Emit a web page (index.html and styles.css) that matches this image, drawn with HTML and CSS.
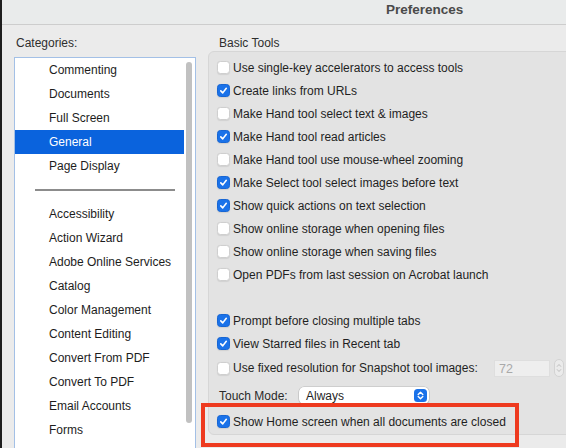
FILE: index.html
```html
<!DOCTYPE html>
<html lang="en">
<head>
<meta charset="utf-8">
<title>Preferences</title>
<link rel="stylesheet" href="styles.css">
</head>
<body>
<div class="window">
  <header class="titlebar"><span class="title">Preferences</span></header>
  <div class="content">
    <aside class="sidebar">
      <div class="label cat-label">Categories:</div>
      <div class="listbox">
        <ul class="list">
          <li>Commenting</li>
          <li>Documents</li>
          <li>Full Screen</li>
          <li class="sel">General</li>
          <li>Page Display</li>
          <li class="sep"></li>
          <li>Accessibility</li>
          <li>Action Wizard</li>
          <li>Adobe Online Services</li>
          <li>Catalog</li>
          <li>Color Management</li>
          <li>Content Editing</li>
          <li>Convert From PDF</li>
          <li>Convert To PDF</li>
          <li>Email Accounts</li>
          <li>Forms</li>
        </ul>
        <div class="scrollbar"><div class="thumb"></div></div>
      </div>
    </aside>
    <main class="panel">
      <div class="label group-label">Basic Tools</div>
      <div class="group">
        <div class="row"><span class="cb"></span><span>Use single-key accelerators to access tools</span></div>
        <div class="row"><span class="cb on"><svg viewBox="0 0 13 13"><path d="M3.3 6.9 L5.6 9.3 L9.8 3.9"/></svg></span><span>Create links from URLs</span></div>
        <div class="row"><span class="cb"></span><span>Make Hand tool select text &amp; images</span></div>
        <div class="row"><span class="cb on"><svg viewBox="0 0 13 13"><path d="M3.3 6.9 L5.6 9.3 L9.8 3.9"/></svg></span><span>Make Hand tool read articles</span></div>
        <div class="row"><span class="cb"></span><span>Make Hand tool use mouse-wheel zooming</span></div>
        <div class="row"><span class="cb on"><svg viewBox="0 0 13 13"><path d="M3.3 6.9 L5.6 9.3 L9.8 3.9"/></svg></span><span>Make Select tool select images before text</span></div>
        <div class="row"><span class="cb on"><svg viewBox="0 0 13 13"><path d="M3.3 6.9 L5.6 9.3 L9.8 3.9"/></svg></span><span>Show quick actions on text selection</span></div>
        <div class="row"><span class="cb"></span><span>Show online storage when opening files</span></div>
        <div class="row"><span class="cb"></span><span>Show online storage when saving files</span></div>
        <div class="row"><span class="cb"></span><span>Open PDFs from last session on Acrobat launch</span></div>
        <div class="row spacer"></div>
        <div class="row"><span class="cb on"><svg viewBox="0 0 13 13"><path d="M3.3 6.9 L5.6 9.3 L9.8 3.9"/></svg></span><span>Prompt before closing multiple tabs</span></div>
        <div class="row"><span class="cb on"><svg viewBox="0 0 13 13"><path d="M3.3 6.9 L5.6 9.3 L9.8 3.9"/></svg></span><span>View Starred files in Recent tab</span></div>
        <div class="row row-fixed">
          <span class="cb"></span><span>Use fixed resolution for Snapshot tool images:</span>
          <span class="numfield">72</span>
          <span class="numstep"><svg viewBox="0 0 10 18"><path d="M2.8 7 L5 4.6 L7.2 7 M2.8 11 L5 13.4 L7.2 11"/></svg></span>
        </div>
        <div class="row row-touch">
          <span class="touch-label">Touch Mode:</span>
          <span class="select"><span class="select-text">Always</span><span class="select-btn"><svg viewBox="0 0 13 13"><path d="M4.2 5.4 L6.5 3.2 L8.8 5.4 M4.2 7.6 L6.5 9.8 L8.8 7.6"/></svg></span></span>
        </div>
        <div class="row"><span class="cb on"><svg viewBox="0 0 13 13"><path d="M3.3 6.9 L5.6 9.3 L9.8 3.9"/></svg></span><span>Show Home screen when all documents are closed</span></div>
      </div>
    </main>
  </div>
  <div class="highlight"></div>
</div>
</body>
</html>
```

FILE: styles.css
```css
* { box-sizing: border-box; }

html, body {
  margin: 0;
  padding: 0;
  width: 566px;
  height: 448px;
  overflow: hidden;
  background: #ebebeb;
}

body {
  font-family: "Liberation Sans", Arial, sans-serif;
  font-size: 12px;
  color: #1f1f1f;
}

.window {
  position: relative;
  width: 566px;
  height: 448px;
  border-left: 2px solid #1e1e1e;
  background: #ebebeb;
  overflow: hidden;
}

.titlebar {
  height: 25px;
  background: #e9ebeb;
  border-bottom: 1px solid #cdcdcd;
  padding-left: 384px;
  padding-top: 0;
}

.title {
  display: block;
  font-weight: bold;
  font-size: 13.5px;
  line-height: 20px;
  color: #4a4a4a;
}

.content {
  display: flex;
  align-items: flex-start;
}

.label {
  height: 16px;
  line-height: 16px;
  color: #2e2e2e;
  margin-top: 10px;
}

.sidebar {
  margin-left: 12px;
  width: 182px;
  flex: none;
}

.cat-label {
  padding-left: 2px;
  margin-bottom: 6px;
}

.listbox {
  display: flex;
  width: 182px;
  height: 400px;
  background: #ffffff;
  border: 1px solid #a3c0e6;
  border-bottom: none;
}

.list {
  list-style: none;
  margin: 0;
  padding: 0;
  width: 169px;
  flex: none;
}

.list li {
  height: 24px;
  line-height: 24px;
  padding-left: 34px;
  white-space: nowrap;
  color: #1d1d1d;
}

.list li.sel {
  background: #0a63dd;
  color: #ffffff;
}

.list li.sep {
  position: relative;
}

.list li.sep::after {
  content: "";
  position: absolute;
  left: 20px;
  top: 11px;
  width: 140px;
  height: 2px;
  background: #8c8c8c;
}

.scrollbar {
  flex: 1;
  padding-top: 4px;
  padding-left: 2px;
}

.thumb {
  width: 6px;
  height: 361px;
  border-radius: 3px;
  background: #c1c1c1;
}

.panel {
  margin-left: 12px;
  flex: none;
}

.group-label {
  padding-left: 11px;
}

.group {
  width: 380px;
  background: #e3e3e3;
  border: 1px solid #d6d6d6;
  border-radius: 6px;
  padding: 4px 23px 1px 8px;
}

.row {
  display: flex;
  align-items: center;
  height: 23px;
  white-space: nowrap;
  color: #1f1f1f;
}

.row-fixed { height: 26px; }
.row-touch { height: 29px; }

.cb {
  width: 13px;
  height: 13px;
  flex: none;
  margin-right: 3px;
  background: #ffffff;
  border: 1px solid #cfcfcf;
  border-radius: 3.5px;
  box-shadow: 0 0.5px 1px rgba(0,0,0,0.08);
  display: flex;
}

.cb.on {
  background: #1a72e9;
  border-color: #1766d4;
}

.cb svg {
  width: 11px;
  height: 11px;
}

.cb svg path {
  fill: none;
  stroke: #ffffff;
  stroke-width: 1.9;
  stroke-linecap: round;
  stroke-linejoin: round;
}

.numfield {
  margin-left: auto;
  width: 56px;
  height: 17px;
  line-height: 17px;
  padding-left: 4px;
  background: #eeeeee;
  border: 1px solid #dedede;
  color: #a9a9a9;
  font-size: 12.5px;
}

.numstep {
  margin-left: 4px;
  width: 10px;
  height: 18px;
  border: 1px solid #d3d3d3;
  border-radius: 5px;
  background: #ebebeb;
  display: flex;
}

.numstep svg {
  width: 8px;
  height: 16px;
}

.numstep path {
  fill: none;
  stroke: #b2b2b2;
  stroke-width: 1;
  stroke-linecap: round;
  stroke-linejoin: round;
}

.touch-label {
  width: 80px;
  margin-left: 2px;
  flex: none;
  color: #2a2a2a;
}

.select {
  display: flex;
  align-items: center;
  width: 130px;
  height: 17px;
  background: #ffffff;
  border-radius: 5px;
  box-shadow: 0 0 0 0.5px rgba(0,0,0,0.18), 0 1px 1.5px rgba(0,0,0,0.12);
}

.select-text {
  flex: 1;
  padding-left: 7px;
  color: #1f1f1f;
}

.select-btn {
  width: 13px;
  height: 13px;
  margin-right: 2px;
  border-radius: 3.5px;
  background: #1a72e9;
  display: flex;
}

.select-btn svg {
  width: 13px;
  height: 13px;
}

.select-btn path {
  fill: none;
  stroke: #ffffff;
  stroke-width: 1.4;
  stroke-linecap: round;
  stroke-linejoin: round;
}

.highlight {
  position: absolute;
  left: 199px;
  top: 403px;
  width: 318px;
  height: 44px;
  border: 4px solid #ee3a1f;
  pointer-events: none;
}
```
